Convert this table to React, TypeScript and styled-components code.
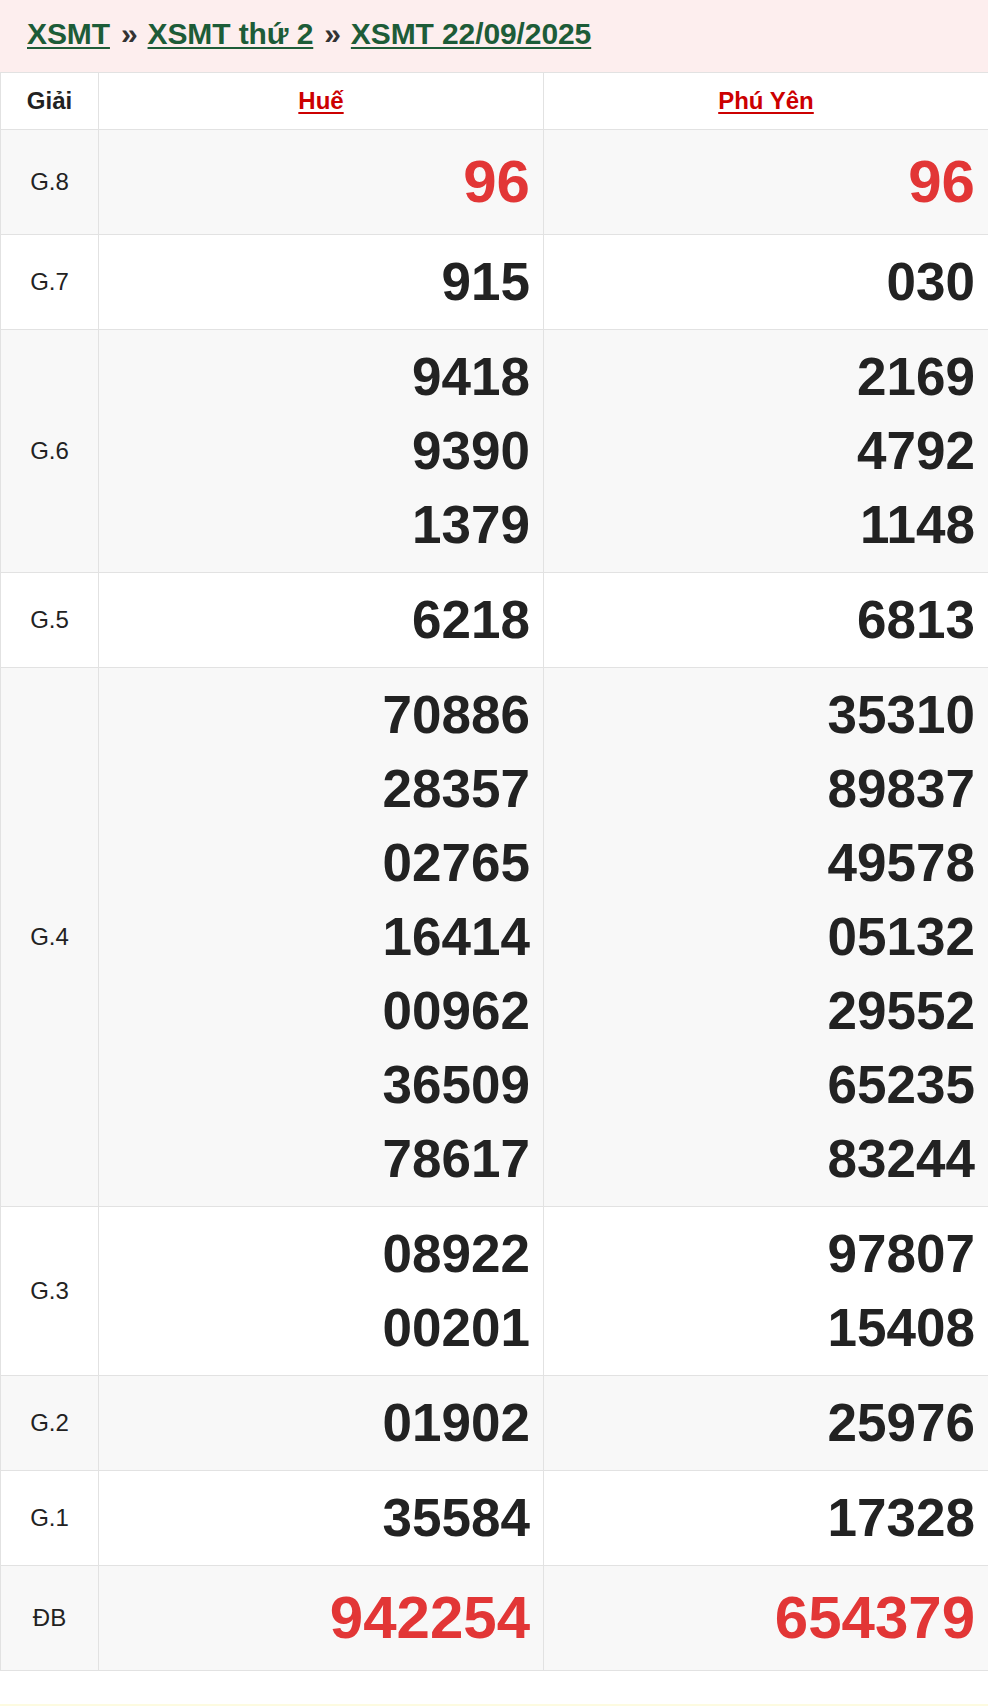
import React from "react";
import styled, { createGlobalStyle } from "styled-components";

const GlobalStyle = createGlobalStyle`
  html, body {
    margin: 0;
    padding: 0;
    background: #ffffff;
  }
  body {
    font-family: "Liberation Sans", Arial, sans-serif;
    color: #222222;
  }
`;

const Page = styled.div`
  width: 988px;
  min-height: 1706px;
  display: flex;
  flex-direction: column;
  background: #ffffff;
`;

const Breadcrumb = styled.nav`
  background: #fdeeee;
  padding: 14px 27px 18px;
  height: 40px;
  line-height: 40px;
  font-size: 30px;
  font-weight: 700;
  white-space: nowrap;
  letter-spacing: -0.1px;
`;

const Crumb = styled.a`
  color: #1d5c38;
  text-decoration: underline;
  text-decoration-thickness: 2px;
  text-underline-offset: 3px;
`;

const Sep = styled.span`
  color: #333333;
  margin: 0 10px 0 11px;
`;

const Table = styled.table`
  width: 988px;
  border-collapse: collapse;
  table-layout: fixed;
  border-left: 1px solid #e2e2e2;
`;

const Row = styled.tr<{ $shade?: boolean }>`
  background: ${(p) => (p.$shade ? "#f8f8f8" : "#ffffff")};
  border-top: 1px solid #e2e2e2;
  border-bottom: 1px solid #e2e2e2;
`;

const HeadCell = styled.th`
  padding: 11px 8px;
  line-height: 34px;
  font-size: 24px;
  font-weight: 700;
  text-align: center;
  color: #222222;
  border-right: 1px solid #e2e2e2;
`;

const StationLink = styled.a`
  color: #cc0000;
  text-decoration: underline;
  text-decoration-thickness: 2px;
  text-underline-offset: 3px;
`;

const LabelCell = styled.td`
  padding: 0 4px;
  font-size: 24px;
  text-align: center;
  vertical-align: middle;
  color: #222222;
  border-right: 1px solid #e2e2e2;
`;

const NumberCell = styled.td`
  padding: 10px 13px 10px;
  text-align: right;
  vertical-align: middle;
  border-right: 1px solid #e2e2e2;
`;

const Num = styled.div<{ $special?: boolean }>`
  font-weight: 700;
  font-size: ${(p) => (p.$special ? "60px" : "53px")};
  line-height: ${(p) => (p.$special ? "84px" : "74px")};
  color: ${(p) => (p.$special ? "#e23636" : "#222222")};
`;

const Footer = styled.div`
  margin-top: auto;
  height: 2px;
  background: #fdfbe0;
`;

type Prize = {
  label: string;
  hue: string[];
  phuYen: string[];
  special?: boolean;
};

const prizes: Prize[] = [
  { label: "G.8", hue: ["96"], phuYen: ["96"], special: true },
  { label: "G.7", hue: ["915"], phuYen: ["030"] },
  { label: "G.6", hue: ["9418", "9390", "1379"], phuYen: ["2169", "4792", "1148"] },
  { label: "G.5", hue: ["6218"], phuYen: ["6813"] },
  {
    label: "G.4",
    hue: ["70886", "28357", "02765", "16414", "00962", "36509", "78617"],
    phuYen: ["35310", "89837", "49578", "05132", "29552", "65235", "83244"],
  },
  { label: "G.3", hue: ["08922", "00201"], phuYen: ["97807", "15408"] },
  { label: "G.2", hue: ["01902"], phuYen: ["25976"] },
  { label: "G.1", hue: ["35584"], phuYen: ["17328"] },
  { label: "ĐB", hue: ["942254"], phuYen: ["654379"], special: true },
];

export default function App() {
  return (
    <Page>
      <GlobalStyle />
      <Breadcrumb>
        <Crumb href="#">XSMT</Crumb>
        <Sep>»</Sep>
        <Crumb href="#">XSMT thứ 2</Crumb>
        <Sep>»</Sep>
        <Crumb href="#">XSMT 22/09/2025</Crumb>
      </Breadcrumb>
      <Table>
        <colgroup>
          <col style={{ width: 98 }} />
          <col style={{ width: 445 }} />
          <col style={{ width: 445 }} />
        </colgroup>
        <thead>
          <Row>
            <HeadCell>Giải</HeadCell>
            <HeadCell>
              <StationLink href="#">Huế</StationLink>
            </HeadCell>
            <HeadCell>
              <StationLink href="#">Phú Yên</StationLink>
            </HeadCell>
          </Row>
        </thead>
        <tbody>
          {prizes.map((p, i) => (
            <Row key={p.label} $shade={i % 2 === 0}>
              <LabelCell>{p.label}</LabelCell>
              <NumberCell>
                {p.hue.map((n, j) => (
                  <Num key={j} $special={p.special}>
                    {n}
                  </Num>
                ))}
              </NumberCell>
              <NumberCell>
                {p.phuYen.map((n, j) => (
                  <Num key={j} $special={p.special}>
                    {n}
                  </Num>
                ))}
              </NumberCell>
            </Row>
          ))}
        </tbody>
      </Table>
      <Footer />
    </Page>
  );
}
